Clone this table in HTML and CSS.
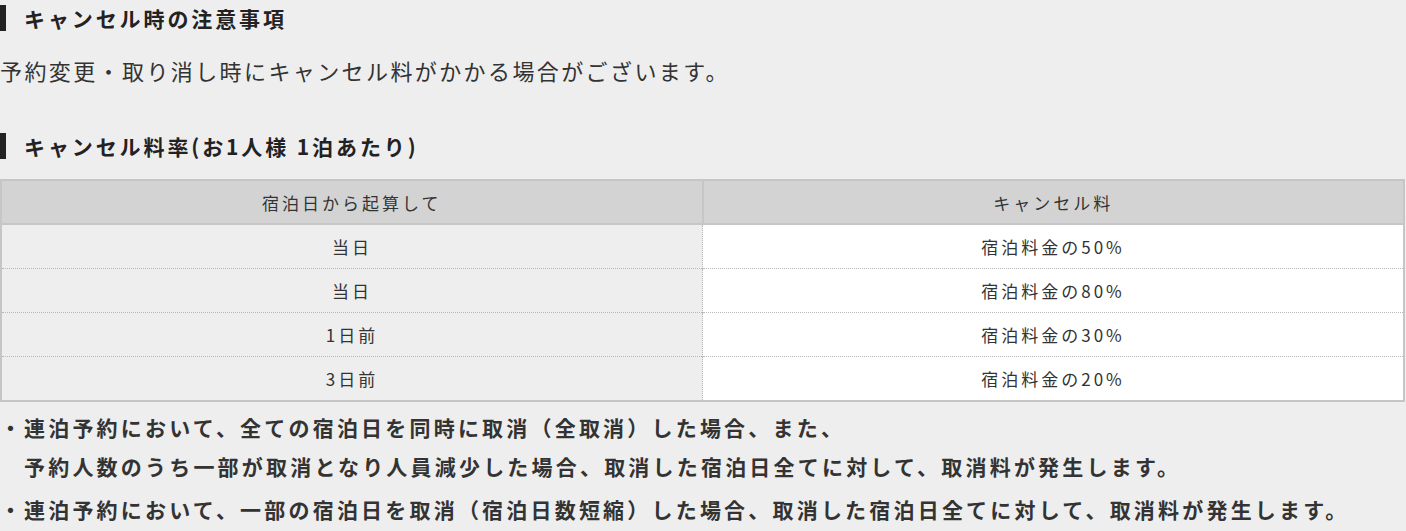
FILE: index.html
```html
<!DOCTYPE html>
<html lang="ja">
<head>
<meta charset="utf-8">
<link rel="stylesheet" href="styles.css">
</head>
<body>
<div class="page">
  <h2 class="heading first">キャンセル時の注意事項</h2>
  <p class="notice">予約変更・取り消し時にキャンセル料がかかる場合がございます。</p>
  <h2 class="heading second">キャンセル料率(お1人様 1泊あたり)</h2>
  <table class="rates">
    <thead>
      <tr><th>宿泊日から起算して</th><th>キャンセル料</th></tr>
    </thead>
    <tbody>
      <tr><td class="day">当日</td><td class="fee">宿泊料金の50%</td></tr>
      <tr><td class="day">当日</td><td class="fee">宿泊料金の80%</td></tr>
      <tr><td class="day">1日前</td><td class="fee">宿泊料金の30%</td></tr>
      <tr><td class="day">3日前</td><td class="fee">宿泊料金の20%</td></tr>
    </tbody>
  </table>
  <ul class="notes">
    <li>連泊予約において、全ての宿泊日を同時に取消（全取消）した場合、また、<br>予約人数のうち一部が取消となり人員減少した場合、取消した宿泊日全てに対して、取消料が発生します。</li>
    <li>連泊予約において、一部の宿泊日を取消（宿泊日数短縮）した場合、取消した宿泊日全てに対して、取消料が発生します。</li>
  </ul>
</div>
</body>
</html>
```
FILE: styles.css
```css
html, body {
  margin: 0;
  padding: 0;
  background: #eeeeee;
}
body {
  font-family: "Noto Sans CJK JP", "Noto Sans", sans-serif;
  color: #333333;
}
.page {
  padding-top: 5px;
}
.heading {
  margin: 0;
  font-size: 21px;
  font-weight: bold;
  color: #222222;
  line-height: 26px;
  border-left: 6px solid #222222;
  padding-left: 18px;
  letter-spacing: 2.9px;
}
.notice {
  margin: 26px 0 0 0;
  font-size: 22px;
  line-height: 27px;
  letter-spacing: 2.4px;
  color: #333333;
}
.heading.second {
  margin-top: 49px;
}
.rates {
  margin-top: 20px;
  width: 1405px;
  border-collapse: collapse;
  border: 2px solid #c6c6c6;
  font-size: 17px;
  letter-spacing: 3px;
  color: #333333;
}
.rates th {
  background: #d3d3d3;
  font-weight: normal;
  height: 42px;
  padding: 0;
  border-bottom: 2px solid #c6c6c6;
  width: 50%;
}
.rates th + th {
  border-left: 2px solid #c6c6c6;
}
.rates td {
  height: 43px;
  padding: 0;
  text-align: center;
  border-top: 1px dotted #b8b8b8;
}
.rates tbody tr:first-child td {
  border-top: none;
}
.rates td.day {
  background: #eeeeee;
}
.rates td.fee {
  background: #ffffff;
  border-left: 1px dotted #b8b8b8;
}
.notes {
  list-style: none;
  margin: 6px 0 0 0;
  padding: 0;
  font-size: 21px;
  font-weight: bold;
  line-height: 39px;
  letter-spacing: 3.2px;
  color: #333333;
}
.notes li {
  position: relative;
  padding-left: 24px;
  margin-bottom: 4px;
}
.notes li::before {
  content: "・";
  position: absolute;
  left: 0;
  top: 0;
  letter-spacing: 0;
}
```
